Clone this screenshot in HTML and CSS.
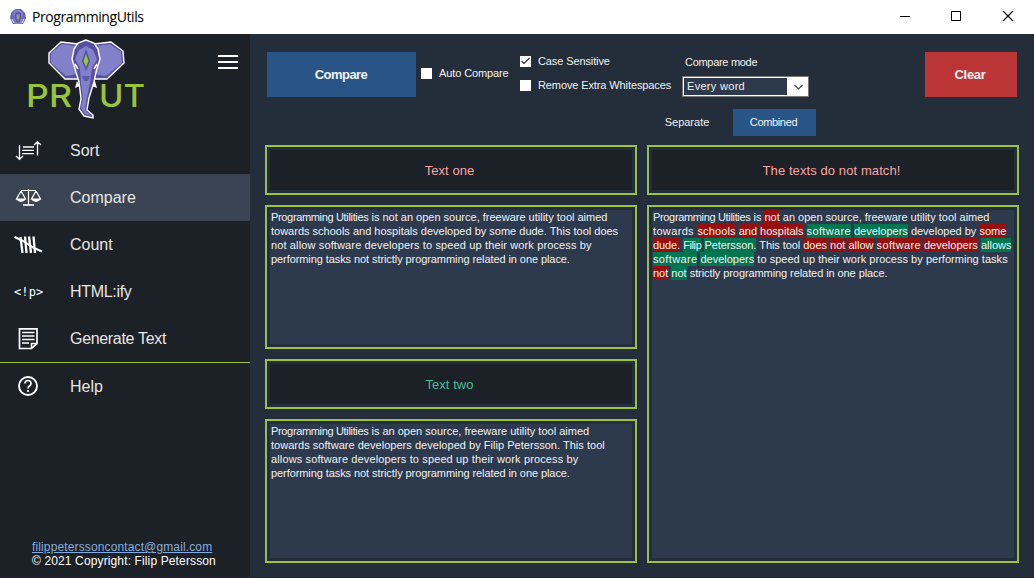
FILE: index.html
```html
<!DOCTYPE html>
<html lang="en">
<head>
<meta charset="utf-8">
<title>ProgrammingUtils</title>
<link rel="stylesheet" href="styles.css">
</head>
<body>
<svg width="0" height="0" class="defs">
  <symbol id="elephant" viewBox="0 0 78 80">
    <path d="M2 14 14 3 31 5 39 2 47 5 64 3 76 12 77 24 60 40H18L2 24Z" fill="#5650a0" stroke="#fff" stroke-width="1.4"/>
    <path d="M4 14 15 5 30 7 26 21 31 35 19 37 4 24ZM74 13 63 5 48 7 52 21 47 35 59 37 75 24Z" fill="#8380ca"/>
    <path d="M30 42 28 49 33 47ZM48 42 50 49 45 47Z" fill="#fff"/>
    <path d="M39 1 31 4 27 10 25 20 29 33 32 43 34 60 32 70 37 77 46 79 46 76 40 71 42 59 47 43 49 33 53 20 51 10 47 4Z" fill="#5650a0" stroke="#fff" stroke-width="1.4"/>
    <path d="M39 7 32 11 28 20 33 29 34 44 36 59 34 69 38 75 44 77 38 71 40 58 43 44 45 29 50 20 46 11Z" fill="#8380ca"/>
    <path d="M39 10 35 22 39 32 43 22Z" fill="#5650a0"/><path d="M39 15 36.500 22 39 28 41.500 22Z" fill="#99c43c"/>
    <path d="M35 37H43L41 42H37Z" fill="#5d59a9"/>
    <path d="M28 25 31 30M50 25 47 30" stroke="#fff" stroke-width="1.5"/>
  </symbol>
</svg>
<header class="titlebar">
  <svg class="app-icon" viewBox="0 0 16 16"><path d="M4 1 6 0H11L15 4 16 9 13 15H3L0 9 1 4Z" fill="#6863b2"/><path d="M4 2 7 1H10L13 4 12 15H5L3 5Z" fill="#8682ca"/><path d="M6 4H10L11 8 9 13H7L5 8Z" fill="#7771bb" stroke="#504a98"/><path d="M8 6V10" stroke="#a1a956" stroke-width="1.7"/><path d="M2 10 4 14M14 10 12 14" stroke="#f2efff"/></svg>
  <span class="app-name">ProgrammingUtils</span>
  <svg class="window-controls" viewBox="0 0 138 34" fill="none" stroke="#000"><path d="M4 16.500H14"/><path d="M55.500 11.500H64.500V20.500H55.500Z"/><path d="M107 11 117 21M117 11 107 21" stroke-width="1.100"/></svg>
</header>
<div class="shell">
  <aside class="sidebar">
    <div class="brand">
      <svg class="logo" viewBox="0 0 150 90">
        <g class="logo-text"><text x="26" y="73" textLength="46" lengthAdjust="spacingAndGlyphs">PR</text><text x="99" y="73" textLength="46" lengthAdjust="spacingAndGlyphs">UT</text></g>
        <use href="#elephant" x="47" y="5" width="78" height="80"/>
      </svg>
      <svg class="menu" viewBox="0 0 20 14" stroke="#fff" stroke-width="2"><path d="M0 1H20M0 7H20M0 13H20"/></svg>
    </div>
    <nav>
      <div class="item"><svg viewBox="0 0 30 23" fill="none" stroke="#fff" stroke-width="1.300"><path d="M5.500 6V20M2 17 5.500 20.300 9 17M23.500 16.500V3M20 6 23.500 2.700 27 6M9 8H20M8 11.300H20M8 14.600H20"/></svg>Sort</div>
      <div class="item active"><svg viewBox="0 0 30 23" fill="none" stroke="#fff" stroke-width="1.200"><path d="M7 4.500H22M14.500 3V19M7 5 2.500 13H11.500L7 5M22 5 17.500 13H26.500L22 5"/><path d="M9 19H20" stroke-width="1.600"/><path d="M2 13H12Q10 16 7 16T2 13ZM17 13H27Q25 16 22 16T17 13Z" fill="#fff" stroke="none"/></svg>Compare</div>
      <div class="item"><svg viewBox="0 0 30 23" fill="none" stroke="#fff" stroke-width="2.300"><path d="M6.500 4 8.500 20M11 3.500 12.500 20M15 3.500 17 20M19.500 3.500 21 20"/><path d="M0.500 4 9 8 20 15 28 18.500" stroke-width="2"/></svg>Count</div>
      <div class="item tight"><span class="tag-icon">&lt;!p&gt;</span>HTML:ify</div>
      <div class="item tight"><svg viewBox="0 0 30 23" fill="none" stroke="#fff" stroke-width="1.700"><path d="M5.500 1.800H23V16.500L17.500 21.500H5.500Z"/><path d="M17.500 21V16.500H22.500M8 5.500H20.500M8 9H20.500M8 12.500H20.500M8 16H15" stroke-width="1.500"/></svg>Generate Text</div>
      <div class="item help"><svg viewBox="0 0 30 23" fill="none" stroke="#fff" stroke-width="1.900"><circle cx="14" cy="11" r="9"/><path d="M11 8.500Q11 5.500 14 5.500T17 8.500Q17 10 15.500 11T14 13.500M14 15V17" stroke-width="1.700"/></svg>Help</div>
    </nav>
    <footer><a>filippeterssoncontact@gmail.com</a><div>© 2021 Copyright: Filip Petersson</div></footer>
  </aside>
  <main>
    <div class="toolbar">
      <div class="button primary">Compare</div>
      <div class="check auto"><i class="box"></i><span>Auto Compare</span></div>
      <div class="checks">
        <div class="check"><i class="box"><svg viewBox="0 0 11 11"><path d="M1.500 5 4 7.500 9.500 2" fill="none" stroke="#333" stroke-width="1.200"/></svg></i><span>Case Sensitive</span></div>
        <div class="check"><i class="box"></i><span>Remove Extra Whitespaces</span></div>
      </div>
      <div class="mode"><label>Compare mode</label><div class="select"><span>Every word</span><svg viewBox="0 0 20 17"><path d="M7.500 7 11.500 11 15.500 7" fill="none" stroke="#444" stroke-width="1.200"/></svg></div></div>
      <div class="button danger">Clear</div>
    </div>
    <div class="tabs"><div class="tab">Separate</div><div class="tab selected">Combined</div></div>
    <div class="panels">
      <section class="column">
        <div class="frame heading red"><div>Text one</div></div>
        <div class="frame text"><div><p><span class="lead">Programming Utilities</span> is not an open source, freeware utility tool aimed</p><p>towards schools and hospitals developed by some dude. This tool does</p><p class="loose">not allow software developers to speed up their work process by</p><p class="close">performing tasks not strictly programming related in one place.</p></div></div>
        <div class="frame heading green"><div>Text two</div></div>
        <div class="frame text"><div><p><span class="lead">Programming Utilities</span> is an open source, freeware utility tool aimed</p><p class="soft">towards software developers developed by Filip Petersson. This tool</p><p class="loose">allows software developers to speed up their work process by</p><p class="close">performing tasks not strictly programming related in one place.</p></div></div>
      </section>
      <section class="column">
        <div class="frame heading wide red"><div>The texts do not match!</div></div>
        <div class="frame text result"><div><p><span class="lead">Programming Utilities</span> is <del>not</del> an open source, freeware utility tool aimed</p><p><span class="extra">towards </span><del class="loose">schools</del> <del>and</del> <del>hospitals</del> <ins class="extra">software</ins> <ins>developers</ins> developed by <del>some</del></p><p><del class="close">dude.</del> <ins class="slim">Filip</ins> <ins class="close">Petersson.</ins> <span class="close">This tool </span><del>does</del> <del>not</del> <del>allow</del> <del class="extra">software</del> <del>developers</del> <ins>allows</ins></p><p><ins class="extra">software</ins> <ins>developers</ins> <span class="soft">to speed up their work process by performing tasks</span></p><p><del>not</del> <ins>not</ins> <span class="close">strictly programming related in one place.</span></p></div></div>
      </section>
    </div>
  </main>
</div>
</body>
</html>
```

FILE: styles.css
```css
* { box-sizing: border-box; }
body { margin: 0; width: 1034px; height: 578px; overflow: hidden; display: flex; flex-direction: column; font: 11px/14px "Liberation Sans", Arial, sans-serif; color: #f2f2f2; background: #242d3a; border-bottom: 1px solid #251f2e; }
.defs { position: absolute; }
.titlebar { height: 34px; flex: none; background: #fff; color: #000; display: flex; align-items: center; padding-left: 10px; }
.app-icon { width: 16px; height: 16px; margin-right: 6px; }
.app-name { flex: 1; font: 14px/20px "Open Sans", sans-serif; letter-spacing: -.42px; }
.window-controls { width: 138px; height: 34px; }
.shell { flex: 1; display: flex; min-height: 0; }
.sidebar { width: 250px; background: #1c2027; display: flex; flex-direction: column; }
.brand { height: 93px; display: flex; justify-content: space-between; padding-right: 12px; }
.logo { width: 150px; height: 90px; }
.logo-text { fill: #99c43c; font: 500 31px "Inter", sans-serif; }
.menu { width: 20px; height: 14px; margin-top: 21px; }
.item { height: 47px; display: flex; align-items: center; padding-left: 14px; font-size: 16px; line-height: 20px; color: #e8e6e3; }
.item svg { width: 30px; height: 23px; margin-right: 26px; }
.active { background: #3a4452; }
.tight { letter-spacing: -.32px; }
.tag-icon { width: 30px; margin-right: 26px; font: 12px "DejaVu Sans Mono", monospace; letter-spacing: .1px; color: #fff; }
.help { height: 48px; border-top: 1px solid #99c43c; }
footer { margin-top: auto; padding: 0 0 9px 32px; font-size: 12px; line-height: 14px; letter-spacing: .13px; color: #fff; white-space: nowrap; }
footer a { color: #84acdf; text-decoration: underline; }
main { flex: 1; padding: 18px 15px 14px; }
.toolbar { height: 51px; display: flex; padding-left: 2px; padding-right: 2px; }
.button { height: 45px; display: flex; align-items: center; justify-content: center; font-size: 13px; font-weight: bold; letter-spacing: -.3px; }
.primary { width: 149px; background: #295586; letter-spacing: -.55px; padding-right: 1px; }
.danger { width: 92px; padding-right: 2px; background: #bb3536; margin-left: auto; }
.check { display: flex; align-items: center; height: 14px; white-space: nowrap; }
.check span { letter-spacing: -.11px; }
.box { width: 11px; height: 11px; background: #fff; margin-right: 7px; }
.box svg { display: block; width: 11px; height: 11px; }
.auto { margin: 14px 0 0 5px; width: 99px; }
.checks { width: 161px; display: flex; flex-direction: column; gap: 10px; padding-top: 2px; }
.mode { width: 128px; padding-top: 3px; }
.mode label { display: block; padding-left: 4px; letter-spacing: -.3px; }
.select { width: 127px; height: 21px; margin: 7px 0 0 1px; border: 1px solid #777; background: #fff; display: flex; padding: 1px; }
.select span { flex: 1; background: #2d394c; padding: 1px 3px; line-height: 15px; letter-spacing: .3px; }
.select svg { width: 20px; height: 17px; }
.tabs { display: flex; height: 27px; margin: 6px 0 9px 377px; line-height: 27px; text-align: center; }
.tab { width: 91px; padding-right: 1px; }
.selected { width: 83px; padding-right: 2px; background: #295586; letter-spacing: -.35px; }
.panels { display: grid; grid-template-columns: 372px 372px; gap: 10px; height: 418px; }
.column { display: flex; flex-direction: column; gap: 10px; }
.frame { border: 2px solid; border-color: #99c43c #99ba62; padding: 3px; height: 144px; box-shadow: inset 1px 0 #20351f, inset -1px 0 #20351f; }
.frame > div { height: 100%; }
.heading { height: 50px; }
.heading > div { background: #1c2027; display: flex; align-items: center; justify-content: center; padding-right: 3px; padding-top: 1px; font-size: 13px; letter-spacing: .05px; }
.red > div { color: #f7a6a6; }
.green > div { color: #4cbb99; }
.wide > div { letter-spacing: .09px; }
.text > div { background: #2d394c; padding-left: 1px; }
.text p { margin: 0; white-space: nowrap; }
.result { flex: 1; }
.lead { letter-spacing: -.34px; }
.loose { letter-spacing: .13px; }
.extra { letter-spacing: .35px; }
.soft { letter-spacing: .03px; }
.close { letter-spacing: -.08px; }
.slim { letter-spacing: -.4px; }
del, ins { text-decoration: none; display: inline-block; height: 14px; }
del { background: #96100f; }
ins { background: #007650; }
```
